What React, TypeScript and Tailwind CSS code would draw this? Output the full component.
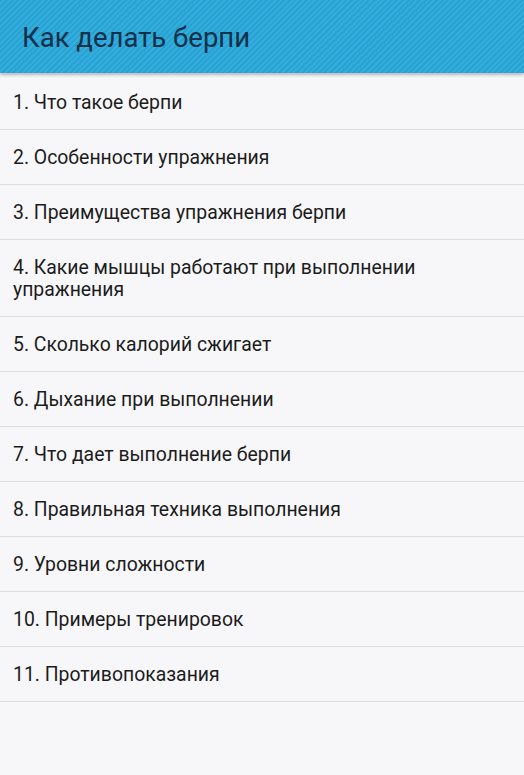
const items = [
  "1. Что такое берпи",
  "2. Особенности упражнения",
  "3. Преимущества упражнения берпи",
  "4. Какие мышцы работают при выполнении упражнения",
  "5. Сколько калорий сжигает",
  "6. Дыхание при выполнении",
  "7. Что дает выполнение берпи",
  "8. Правильная техника выполнения",
  "9. Уровни сложности",
  "10. Примеры тренировок",
  "11. Противопоказания",
];

export default function App() {
  return (
    <div className="flex min-h-[775px] w-[524px] flex-col bg-[#f7f7f9] font-['Roboto',sans-serif]">
      <header className="relative z-10 flex h-[73px] items-center bg-[repeating-linear-gradient(135deg,#27a2d2_0px,#27a2d2_2px,#33aedc_2px,#33aedc_4px)] pl-[22px] pt-[3px] shadow-[0_2px_3px_rgba(0,0,0,0.25)]">
        <h1 className="text-[27.5px] leading-none text-[#13304a]">Как делать берпи</h1>
      </header>
      <ul className="mt-[2px] flex flex-col">
        {items.map((t) => (
          <li
            key={t}
            className="border-b border-[#dedee0] pt-[17px] pb-[15px] pl-[13px] pr-[20px] text-[19.4px] leading-[22px] text-[#1c1c1c]"
          >
            {t}
          </li>
        ))}
      </ul>
    </div>
  );
}
